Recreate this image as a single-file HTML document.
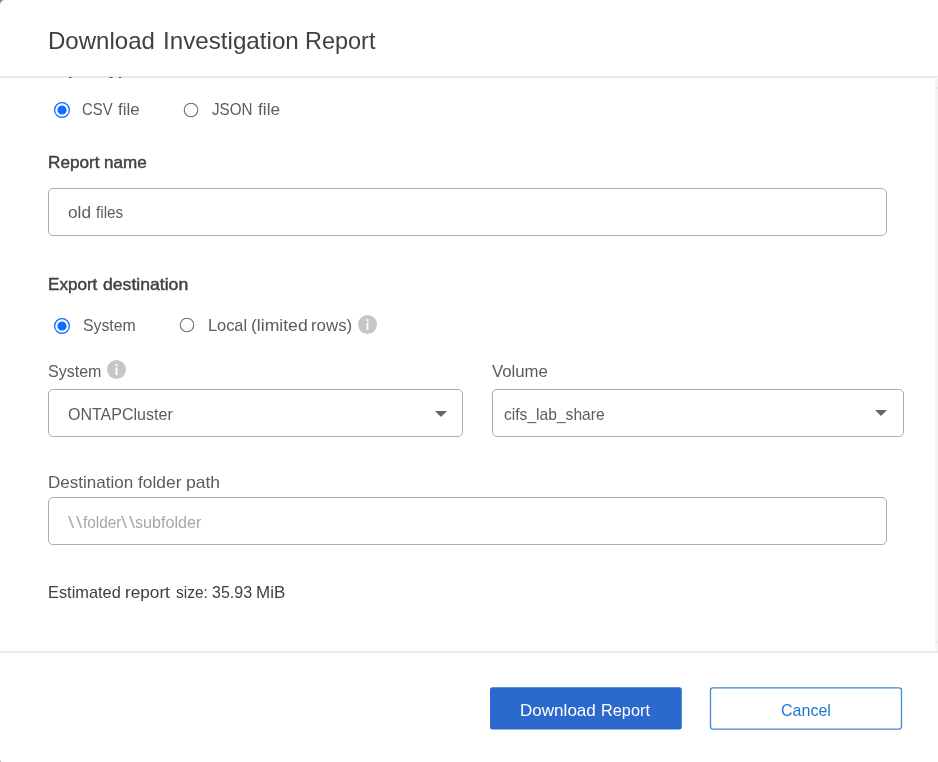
<!DOCTYPE html>
<html lang="en">
<head>
<meta charset="utf-8">
<title>Download Investigation Report</title>
<style>
  html, body { margin: 0; padding: 0; }
  body {
    width: 938px; height: 762px; overflow: hidden; position: relative;
    background: #8c8c8c;
    font-family: "Liberation Sans", sans-serif;
    color: #5c5c5c;
  }
  .modal {
    position: absolute; left: 0; top: 0; width: 960px; height: 762px;
    background: #fff; border-radius: 5px 0 0 2px; overflow: hidden; will-change: transform;
  }
  .t { position: absolute; white-space: nowrap; line-height: 1; margin: 0; font-weight: 400; }
  .p { position: absolute; left: 0; margin: 0; white-space: nowrap; line-height: 1; font-weight: 400; }
  .w { position: absolute; top: 0; display: block; transform-origin: 0 50%; }
  .b { font-weight: 700; color: #484848; }
  .hline { position: absolute; left: 0; width: 938px; height: 2px; background: #e9e9e9; }
  .body { position: absolute; left: 0; top: 77px; width: 938px; height: 574px; overflow: hidden; }
  .track { position: absolute; left: 935px; top: 77px; width: 3px; height: 574px; background: #f4f4f4; }
  .box { position: absolute; box-sizing: border-box; border: 1px solid #adadad; border-radius: 5px; background: #fff; }
  .rad { position: absolute; display: block; }
  .arrow { position: absolute; width: 0; height: 0; border-left: 6px solid transparent; border-right: 6px solid transparent; border-top: 6px solid #666; }
</style>
</head>
<body>
<div class="modal">
  <h1 class="p" id="title" style="top:28.5px; font-size:24px; color:#404040;"><span class="w" id="title_0" style="left:48.00px; transform:scaleX(1.0016);">Download</span> <span class="w" id="title_1" style="left:162.66px; transform:scaleX(1.0078);">Investigation</span> <span class="w" id="title_2" style="left:305.40px; transform:scaleX(0.9778);">Report</span></h1>
  <div class="hline" style="top:76px"></div>

  <div class="body">
    <div class="t b" id="rtype" style="left:47.5px; top:-15px; font-size:16px;">Report type</div>
  </div>

  <svg class="rad" style="left:51.9px; top:99.9px" width="20" height="20" viewBox="0 0 20 20"><circle cx="10" cy="10" r="7.35" fill="#fff" stroke="#0b6cff" stroke-width="1.25"/><circle cx="10" cy="10" r="4.55" fill="#0b6cff"/></svg>
  <div class="p" id="csv" style="top:100.6px; font-size:17px;"><span class="w" id="csv_0" style="left:82.31px; transform:scaleX(0.8741);">CSV</span> <span class="w" id="csv_1" style="left:118.10px; transform:scaleX(0.9948);">file</span></div>
  <svg class="rad" style="left:181.3px; top:99.6px" width="20" height="20" viewBox="0 0 20 20"><circle cx="10" cy="10" r="6.75" fill="#fff" stroke="#6c6c6c" stroke-width="1.1"/></svg>
  <div class="p" id="json" style="top:100.6px; font-size:17px;"><span class="w" id="json_0" style="left:211.75px; transform:scaleX(0.8927);">JSON</span> <span class="w" id="json_1" style="left:257.93px; transform:scaleX(1.0179);">file</span></div>

  <div class="p" id="rname" style="top:153.8px; font-size:16.5px; color:#404040; -webkit-text-stroke:0.42px;"><span class="w" id="rname_0" style="left:47.66px; transform:scaleX(1.0402);">Report</span> <span class="w" id="rname_1" style="left:103.77px; transform:scaleX(1.0342);">name</span></div>
  <div class="box" style="left:48px; top:188px; width:839px; height:48px"></div>
  <div class="p" id="old" style="top:204.5px; font-size:15.6px;"><span class="w" id="old_0" style="left:67.86px; transform:scaleX(1.1036);">old</span> <span class="w" id="old_1" style="left:95.57px; transform:scaleX(0.9837);">files</span></div>

  <div class="p" id="expd" style="top:276.0px; font-size:16.5px; color:#404040; -webkit-text-stroke:0.42px;"><span class="w" id="expd_0" style="left:48.13px; transform:scaleX(1.0349);">Export</span> <span class="w" id="expd_1" style="left:103.19px; transform:scaleX(1.0674);">destination</span></div>
  <svg class="rad" style="left:51.8px; top:315.5px" width="20" height="20" viewBox="0 0 20 20"><circle cx="10" cy="10" r="7.35" fill="#fff" stroke="#0b6cff" stroke-width="1.25"/><circle cx="10" cy="10" r="4.55" fill="#0b6cff"/></svg>
  <div class="p" id="sysr" style="top:317.0px; font-size:17px;"><span class="w" id="sysr_0" style="left:82.79px; transform:scaleX(0.9287);">System</span></div>
  <svg class="rad" style="left:176.9px; top:315.4px" width="20" height="20" viewBox="0 0 20 20"><circle cx="10" cy="10" r="6.75" fill="#fff" stroke="#6c6c6c" stroke-width="1.1"/></svg>
  <div class="p" id="local" style="top:317.0px; font-size:17px;"><span class="w" id="local_0" style="left:208.00px; transform:scaleX(0.9622);">Local</span> <span class="w" id="local_1" style="left:250.98px; transform:scaleX(1.0344);">(limited</span> <span class="w" id="local_2" style="left:310.95px; transform:scaleX(0.9913);">rows)</span></div>
  <svg class="rad" style="left:358px; top:315px" width="19" height="19" viewBox="0 0 19 19"><circle cx="9.5" cy="9.5" r="9.5" fill="#c6c6c6"/><rect x="8.55" y="7.5" width="1.9" height="7.5" fill="#fff"/><circle cx="9.5" cy="5.1" r="1.2" fill="#fff"/></svg>

  <div class="p" id="sysl" style="top:363.1px; font-size:17px;"><span class="w" id="sysl_0" style="left:47.77px; transform:scaleX(0.9430);">System</span></div>
  <svg class="rad" style="left:107px; top:360px" width="19" height="19" viewBox="0 0 19 19"><circle cx="9.5" cy="9.5" r="9.5" fill="#c6c6c6"/><rect x="8.55" y="7.5" width="1.9" height="7.5" fill="#fff"/><circle cx="9.5" cy="5.1" r="1.2" fill="#fff"/></svg>
  <div class="p" id="vol" style="top:363.1px; font-size:17px;"><span class="w" id="vol_0" style="left:492.17px; transform:scaleX(0.9860);">Volume</span></div>

  <div class="box" style="left:48px; top:389px; width:415px; height:48px"></div>
  <div class="p" id="ontap" style="top:405.5px; font-size:17px;"><span class="w" id="ontap_0" style="left:67.94px; transform:scaleX(0.9422);">ONTAPCluster</span></div>
  <div class="arrow" style="left:435px; top:411px"></div>

  <div class="box" style="left:492px; top:389px; width:412px; height:48px"></div>
  <div class="p" id="cifs" style="top:405.5px; font-size:17px;"><span class="w" id="cifs_0" style="left:504.04px; transform:scaleX(0.9183);">cifs_lab_share</span></div>
  <div class="arrow" style="left:875px; top:410px"></div>

  <div class="p" id="dest" style="top:474.2px; font-size:17px;"><span class="w" id="dest_0" style="left:47.51px; transform:scaleX(1.0025);">Destination</span> <span class="w" id="dest_1" style="left:138.33px; transform:scaleX(1.0211);">folder</span> <span class="w" id="dest_2" style="left:185.93px; transform:scaleX(1.0298);">path</span></div>
  <div class="box" style="left:48px; top:497px; width:839px; height:48px"></div>
  <div class="p" id="ph" style="top:515.0px; font-size:15.6px; color:#a8a8a8;"><span class="w" id="ph_0" style="left:68.17px; transform:scaleX(1.4315); letter-spacing:1.2px; color:#aeaeae;">\\</span><span class="w" id="ph_1" style="left:82.56px; transform:scaleX(0.9870);">folder</span><span class="w" id="ph_2" style="left:120.71px; transform:scaleX(1.4364); letter-spacing:1.2px; color:#aeaeae;">\\</span><span class="w" id="ph_3" style="left:134.71px; transform:scaleX(1.0336);">subfolder</span></div>

  <div class="p" id="est" style="top:584.0px; font-size:17px; color:#404040;"><span class="w" id="est_0" style="left:47.71px; transform:scaleX(0.9621);">Estimated</span> <span class="w" id="est_1" style="left:125.00px; transform:scaleX(1.0110);">report</span> <span class="w" id="est_2" style="left:176.17px; transform:scaleX(0.9107);">size:</span> <span class="w" id="est_3" style="left:211.89px; transform:scaleX(0.9423);">35.93</span> <span class="w" id="est_4" style="left:256.40px; transform:scaleX(0.9980);">MiB</span></div>

  <div class="track"></div>
  <div style="position:absolute; left:937px; top:87px; width:1px; height:2px; background:#e6e6e6"></div>
  <div style="position:absolute; left:937px; top:641px; width:1px; height:2px; background:#e6e6e6"></div>
  <div class="hline" style="top:651px"></div>

  <svg class="rad" style="left:480px; top:680px" width="440" height="60" viewBox="0 0 440 60"><rect x="10" y="7.3" width="191.8" height="42.3" rx="2.5" fill="#2c69cc"/><rect x="230.5" y="7.8" width="191" height="41.3" rx="2.5" fill="#fff" stroke="#3f8ad8" stroke-width="1.3"/></svg>
  <div class="p" id="dl" style="top:701.6px; font-size:17px; color:#fff;"><span class="w" id="dl_0" style="left:519.96px; transform:scaleX(1.0031);">Download</span> <span class="w" id="dl_1" style="left:600.93px; transform:scaleX(0.9601);">Report</span></div>
  <div class="p" id="cancel" style="top:701.6px; font-size:17px; color:#1c76d1;"><span class="w" id="cancel_0" style="left:781.25px; transform:scaleX(0.9431);">Cancel</span></div>
</div>
</body>
</html>
